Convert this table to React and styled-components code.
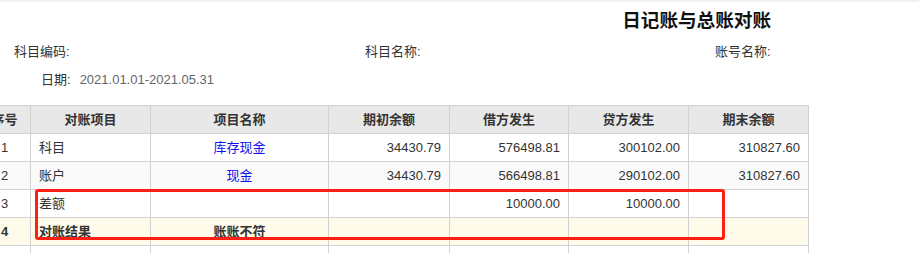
import React from 'react'
import styled, { createGlobalStyle } from 'styled-components'

const GlobalStyle = createGlobalStyle`
  html, body {
    margin: 0;
    padding: 0;
    background: #fff;
  }
  body {
    font-family: 'Liberation Sans', Arial, 'Noto Sans CJK SC', sans-serif;
    font-size: 13px;
    color: #333;
    overflow: hidden;
  }
`

const Page = styled.div`
  width: 919px;
  height: 253px;
  border-top: 2px solid #f2f2f2;
  box-sizing: border-box;
  overflow: hidden;
`

const TitleBar = styled.div`
  display: flex;
  justify-content: flex-end;
  padding: 6px 148px 0 0;
`

const Title = styled.h1`
  margin: 0;
  font-size: 18.6px;
  line-height: 26px;
  font-weight: bold;
  color: #111;
`

const InfoRow = styled.div`
  display: grid;
  grid-template-columns: 351px 350px auto;
  padding-left: 14px;
  margin-top: 4px;
  line-height: 28px;
`

const Label = styled.span`
  color: #333;
`

const DateRow = styled.div`
  display: flex;
  gap: 9px;
  padding-left: 41px;
  line-height: 28px;
`

const DateValue = styled.span`
  color: #666;
`

const TableWrap = styled.div`
  position: relative;
  margin: 11px 0 0 -22px;
  width: 831px;
`

const Table = styled.table`
  border-collapse: collapse;
  table-layout: fixed;
  width: 831px;
  line-height: 16px;
`

const Th = styled.th`
  height: 27px;
  padding: 0;
  background: #e8e8e8;
  border: 1px solid #d2d2d2;
  font-weight: bold;
  text-align: center;
  color: #333;
`

const Row = styled.tr`
  background: ${p => (p.$tone === 'alt' ? '#fafafa' : p.$tone === 'result' ? '#fffbea' : '#fff')};
  font-weight: ${p => (p.$tone === 'result' ? 'bold' : 'normal')};
`

const Td = styled.td`
  height: 27px;
  padding: 0 8px;
  border: 1px solid #d2d2d2;
  text-align: ${p => p.$align || 'left'};
  color: ${p => (p.$link ? '#1010ee' : '#333')};
  white-space: nowrap;
  overflow: hidden;
`

const Highlight = styled.div`
  position: absolute;
  left: 57px;
  top: 84px;
  width: 690px;
  height: 51px;
  box-sizing: border-box;
  border: 3px solid #ff1e14;
  border-radius: 3px;
  pointer-events: none;
`

const widths = [52, 120, 178, 121, 119, 120, 120]
const heads = ['序号', '对账项目', '项目名称', '期初余额', '借方发生', '贷方发生', '期末余额']

const rows = [
  { no: '1', item: '科目', name: '库存现金', link: true, begin: '34430.79', debit: '576498.81', credit: '300102.00', end: '310827.60' },
  { no: '2', item: '账户', name: '现金', link: true, begin: '34430.79', debit: '566498.81', credit: '290102.00', end: '310827.60', tone: 'alt' },
  { no: '3', item: '差额', name: '', begin: '', debit: '10000.00', credit: '10000.00', end: '' },
  { no: '4', item: '对账结果', name: '账账不符', begin: '', debit: '', credit: '', end: '', tone: 'result' },
  { no: '', item: '', name: '', begin: '', debit: '', credit: '', end: '' },
]

export default function App() {
  return (
    <Page>
      <GlobalStyle />
      <TitleBar>
        <Title>日记账与总账对账</Title>
      </TitleBar>
      <InfoRow>
        <Label>科目编码:</Label>
        <Label>科目名称:</Label>
        <Label>账号名称:</Label>
      </InfoRow>
      <DateRow>
        <Label>日期:</Label>
        <DateValue>2021.01.01-2021.05.31</DateValue>
      </DateRow>
      <TableWrap>
        <Table>
          <colgroup>
            {widths.map((w, i) => <col key={i} style={{ width: w }} />)}
          </colgroup>
          <thead>
            <tr>
              {heads.map(h => <Th key={h}>{h}</Th>)}
            </tr>
          </thead>
          <tbody>
            {rows.map((r, i) => (
              <Row key={i} $tone={r.tone}>
                <Td $align="center">{r.no}</Td>
                <Td>{r.item}</Td>
                <Td $align="center" $link={r.link}>{r.name}</Td>
                <Td $align="right">{r.begin}</Td>
                <Td $align="right">{r.debit}</Td>
                <Td $align="right">{r.credit}</Td>
                <Td $align="right">{r.end}</Td>
              </Row>
            ))}
          </tbody>
        </Table>
        <Highlight />
      </TableWrap>
    </Page>
  )
}
